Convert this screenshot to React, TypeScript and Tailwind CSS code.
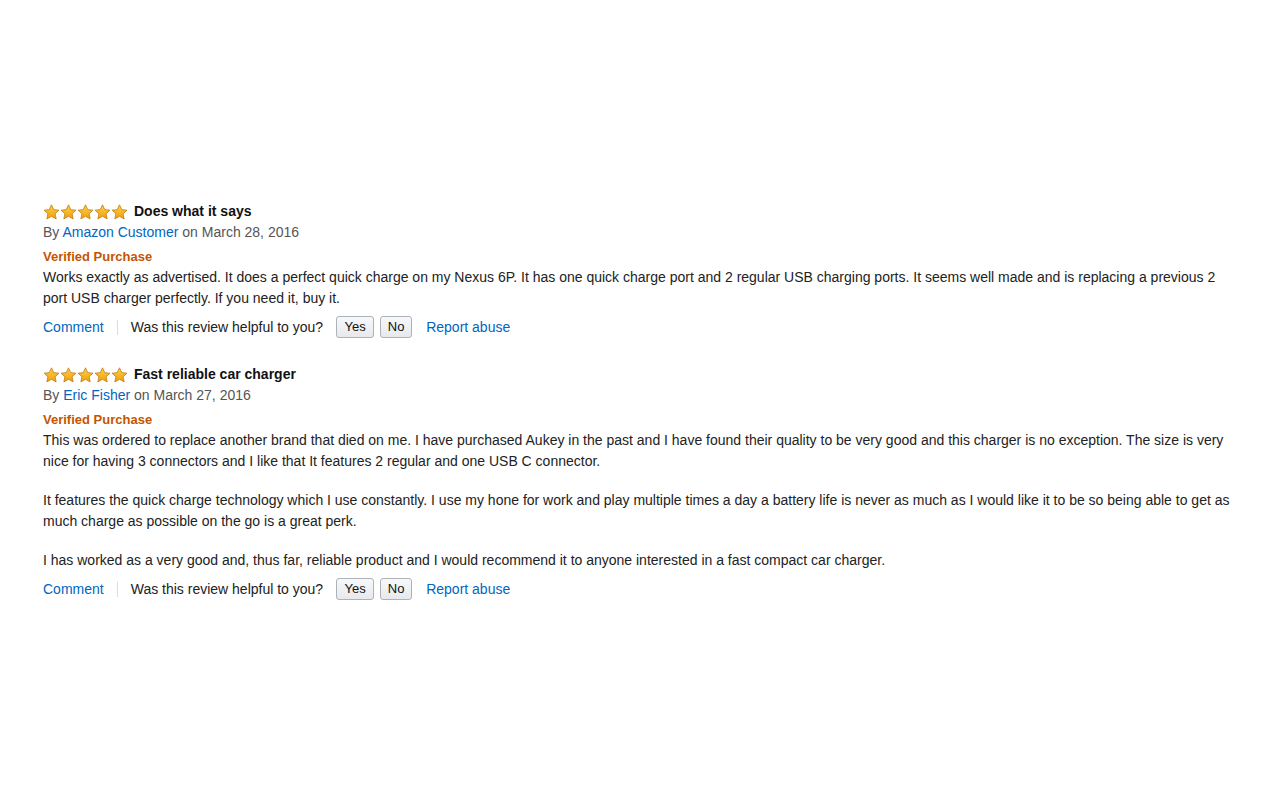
import React from 'react';

const REVIEWS = [
  {
    id: 1,
    title: 'Does what it says',
    author: 'Amazon Customer',
    date: 'March 28, 2016',
    paragraphs: [
      'Works exactly as advertised. It does a perfect quick charge on my Nexus 6P. It has one quick charge port and 2 regular USB charging ports. It seems well made and is replacing a previous 2 port USB charger perfectly. If you need it, buy it.',
    ],
  },
  {
    id: 2,
    title: 'Fast reliable car charger',
    author: 'Eric Fisher',
    date: 'March 27, 2016',
    paragraphs: [
      'This was ordered to replace another brand that died on me. I have purchased Aukey in the past and I have found their quality to be very good and this charger is no exception. The size is very nice for having 3 connectors and I like that It features 2 regular and one USB C connector.',
      'It features the quick charge technology which I use constantly. I use my hone for work and play multiple times a day a battery life is never as much as I would like it to be so being able to get as much charge as possible on the go is a great perk.',
      'I has worked as a very good and, thus far, reliable product and I would recommend it to anyone interested in a fast compact car charger.',
    ],
  },
];

function Star() {
  return (
    <svg width="17" height="16" viewBox="0 0 24 23" className="shrink-0">
      <defs>
        <linearGradient id="starFill" x1="0" y1="0" x2="0" y2="1">
          <stop offset="0" stopColor="#ffd24a" />
          <stop offset="1" stopColor="#f29d0a" />
        </linearGradient>
      </defs>
      <path
        d="M12 1.2l3.2 6.9 7.5.8-5.6 5.1 1.6 7.4L12 17.6l-6.7 3.8 1.6-7.4L1.3 8.9l7.5-.8z"
        fill="url(#starFill)"
        stroke="#c07f10"
        strokeWidth="1.2"
        strokeLinejoin="round"
      />
    </svg>
  );
}

function Review({ review }: { review: (typeof REVIEWS)[number] }) {
  return (
    <div>
      <div className="flex items-center h-[21px]">
        <div className="flex items-center">
          {[0, 1, 2, 3, 4].map((i) => (
            <Star key={i} />
          ))}
        </div>
        <span className="ml-[6px] font-bold text-[14px] text-[#111]">{review.title}</span>
      </div>
      <div className="text-[14px] leading-[21px] text-[#555]">
        By <span className="text-[#0066c0]">{review.author}</span> on {review.date}
      </div>
      <div className="mt-[3px] text-[13px] leading-[21px] font-bold text-[#c45500]">Verified Purchase</div>
      <div className="text-[14px] leading-[21px] text-[#222] w-[1195px]">
        {review.paragraphs.map((p, i) => (
          <p key={i} className={i > 0 ? 'mt-[18px]' : ''}>
            {p}
          </p>
        ))}
      </div>
      <div className="mt-[7px] flex items-center h-[22px] text-[14px]">
        <span className="text-[#0066c0]">Comment</span>
        <span className="mx-[13px] h-[15px] w-px bg-[#ddd]" />
        <span className="text-[#222]">Was this review helpful to you?</span>
        <button className="ml-[13px] h-[22px] w-[38px] rounded-[3px] border border-[#adb1b8] bg-gradient-to-b from-[#f7f8fa] to-[#e7e9ec] text-[13px] text-[#111]">
          Yes
        </button>
        <button className="ml-[6px] h-[22px] w-[32px] rounded-[3px] border border-[#adb1b8] bg-gradient-to-b from-[#f7f8fa] to-[#e7e9ec] text-[13px] text-[#111]">
          No
        </button>
        <span className="ml-[14px] text-[#0066c0]">Report abuse</span>
      </div>
    </div>
  );
}

export default function App() {
  return (
    <div
      className="w-[1280px] h-[800px] bg-white pt-[201px] pl-[43px]"
      style={{ fontFamily: '"Liberation Sans", Arial, sans-serif' }}
    >
      <div className="flex flex-col gap-[26px]">
        {REVIEWS.map((r) => (
          <Review key={r.id} review={r} />
        ))}
      </div>
    </div>
  );
}
